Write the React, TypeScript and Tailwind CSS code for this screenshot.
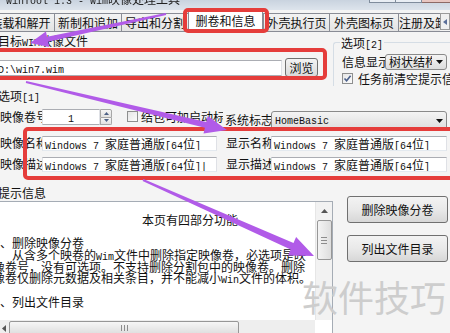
import React from "react";

// ASCII runs use a narrow mono face, CJK runs use Noto Sans CJK
function Mix({ t }: { t: string }) {
  const parts = t.match(/[\x20-\x7e]+|[^\x20-\x7e]+/g) || [];
  return (
    <>
      {parts.map((p, i) =>
        /[\x20-\x7e]/.test(p[0]) ? (
          <span key={i} className="font-['Liberation_Mono',monospace] text-[10px] whitespace-pre">
            {p}
          </span>
        ) : (
          <span key={i}>{p}</span>
        )
      )}
    </>
  );
}

function arrowPts(x0: number, y0: number, x1: number, y1: number, w0: number, w1: number, L: number, H: number) {
  const dx = x1 - x0;
  const dy = y1 - y0;
  const len = Math.hypot(dx, dy);
  const ux = dx / len;
  const uy = dy / len;
  const nx = -uy;
  const ny = ux;
  const bx = x1 - ux * L;
  const by = y1 - uy * L;
  const pts = [
    [x0 + (nx * w0) / 2, y0 + (ny * w0) / 2],
    [bx + (nx * w1) / 2, by + (ny * w1) / 2],
    [bx + (nx * H) / 2, by + (ny * H) / 2],
    [x1, y1],
    [bx - (nx * H) / 2, by - (ny * H) / 2],
    [bx - (nx * w1) / 2, by - (ny * w1) / 2],
    [x0 - (nx * w0) / 2, y0 - (ny * w0) / 2],
  ];
  return pts.map((q) => q.map((v) => v.toFixed(1)).join(",")).join(" ");
}

const tabs = [
  { label: "装载和解开", w: "w-[68px]" },
  { label: "新制和追加", w: "w-[67px]" },
  { label: "导出和分割", w: "w-[67px]" },
  { label: "删卷和信息", w: "w-[75px]", active: true },
  { label: "外壳执行页", w: "w-[66px]" },
  { label: "外壳图标页", w: "w-[69px]" },
  { label: "注册及卸载", w: "w-[42px]" },
];

const Check = ({ checked }: { checked?: boolean }) => (
  <div className="w-[11px] h-[11px] shrink-0 border border-[#8e8f8f] bg-gradient-to-br from-[#e6e6e6] to-[#fbfbfb] flex items-center justify-center">
    {checked && (
      <svg width="9" height="9" viewBox="0 0 9 9">
        <path d="M1.5 4.5 L3.6 6.8 L7.6 1.8" fill="none" stroke="#4a5f8a" strokeWidth="1.6" />
      </svg>
    )}
  </div>
);

const Combo = ({ text, w, h }: { text: string; w: string; h: string }) => (
  <div
    className={`${w} ${h} shrink-0 flex items-center rounded-[3px] border border-[#8a8a8a] bg-gradient-to-b from-[#f4f4f4] to-[#dedede] overflow-hidden`}
  >
    <div className="flex-1 pl-[3px] whitespace-nowrap overflow-hidden leading-[14px]">
      <Mix t={text} />
    </div>
    <div className="w-[14px] flex justify-center">
      <svg width="7" height="4" viewBox="0 0 7 4">
        <path d="M0 0 H7 L3.5 4 Z" fill="#111" />
      </svg>
    </div>
  </div>
);

const Field = ({ text, w }: { text: string; w: string }) => (
  <div
    className={`${w} h-[15px] shrink-0 bg-white border border-[#abadb3] border-x-[#dfe1e6] border-b-[#e3e9ef] pl-[2px] leading-[13px] whitespace-nowrap overflow-hidden`}
  >
    <Mix t={text} />
  </div>
);

const Btn = ({ text }: { text: string }) => (
  <div className="h-[27px] w-[101px] rounded-[3px] border border-[#707070] bg-gradient-to-b from-[#f3f3f3] via-[#e9e9e9] to-[#d7d7d7] flex items-center justify-center text-[12px]">
    {text}
  </div>
);

// one line of the info text, fixed height so mixed font sizes don't grow it
const Line = ({ className, children }: { className?: string; children?: React.ReactNode }) => (
  <div className={`h-[11.7px] leading-[11.7px] whitespace-nowrap ${className ?? ""}`}>{children}</div>
);

export default function App() {
  return (
    <div className="w-[450px] h-[333px] relative overflow-hidden bg-[#f4f4f4] text-[12px] text-[#111] font-['Noto_Sans_CJK_SC',sans-serif]">
      {/* title bar */}
      <div className="h-[10px] flex bg-gradient-to-b from-[#c9d3df] to-[#dde4ec] overflow-hidden">
        <div className="-mt-[8px] ml-[6px] text-[12px] leading-[14px] text-[#222] whitespace-nowrap blur-[0.5px]">
          <Mix t="WinTool 1.3 - Wim映像处理工具" />
        </div>
        <div className="ml-auto flex items-start">
          <div className="w-[27px] h-[3px] border-x border-b border-[#7f8c9c] bg-[#e9eef4]" />
          <div className="w-[26px] h-[3px] border-r border-b border-[#7f8c9c] bg-[#e9eef4]" />
          <div className="w-[28px] h-[3px] border-b border-[#8d6a66] bg-[#e8c6c1]" />
        </div>
      </div>

      {/* tab strip */}
      <div className="h-[21px] flex items-end -ml-[14px]">
        {tabs.map((t) =>
          t.active ? (
            <div
              key={t.label}
              className={`${t.w} h-[21px] shrink-0 bg-white border border-b-0 border-[#898c95] rounded-t-[2px] text-center leading-[19px] whitespace-nowrap overflow-hidden relative z-10`}
            >
              {t.label}
            </div>
          ) : (
            <div
              key={t.label}
              className={`${t.w} h-[18px] shrink-0 bg-gradient-to-b from-[#f3f3f3] to-[#e3e3e3] border-l border-t border-[#898c95] text-center leading-[17px] whitespace-nowrap overflow-hidden`}
            >
              {t.label}
            </div>
          )
        )}
        <div className="w-[10px] h-[17px] shrink-0 border border-[#9a9a9a] bg-[#f0f0f0] flex items-center pl-[2px] mb-[1px]">
          <svg width="4" height="6" viewBox="0 0 4 6">
            <path d="M4 0 V6 L0 3 Z" fill="#5b6f99" />
          </svg>
        </div>
      </div>

      {/* page */}
      <div className="border-t border-[#898c95]">
        {/* target file + options[2] */}
        <div className="flex h-[54px]">
          <div className="w-[333px] shrink-0 pt-[2px]">
            <div className="-ml-[2px] leading-[13px]">
              <Mix t="目标WIM映像文件" />
            </div>
            <div className="mt-[8px] flex items-center h-[19px]">
              <div className="-ml-[4px] w-[286px] h-[16px] bg-white border border-[#abadb3] border-x-[#dfe1e6] pl-[1px] leading-[14px]">
                <Mix t="D:\win7.wim" />
              </div>
              <div className="ml-[3px] w-[33px] h-[19px] rounded-[3px] border border-[#707070] bg-gradient-to-b from-[#f3f3f3] to-[#d9d9d9] flex items-center justify-center">
                浏览
              </div>
            </div>
          </div>
          <div className="mt-[10px] flex-1 border-l border-t border-[#d5dde5] rounded-tl-[3px] pl-[8px]">
            <div className="-mt-[7px] -ml-[2px] w-fit bg-[#f4f4f4] px-[1px] leading-[13px]">
              <Mix t="选项[2]" />
            </div>
            <div className="mt-[2px] flex items-center">
              <div className="w-[43px] shrink-0 overflow-hidden whitespace-nowrap leading-[14px]">信息显示</div>
              <Combo text="树状结构" w="w-[62px]" h="h-[16px]" />
            </div>
            <div className="mt-[2px] flex items-center h-[13px]">
              <Check checked />
              <div className="ml-[5px] whitespace-nowrap leading-[13px]">任务前清空提示信息</div>
            </div>
          </div>
        </div>

        {/* options[1] */}
        <div className="pt-[4px]">
          <div className="-ml-[2px] leading-[12px]">
            <Mix t="选项[1]" />
          </div>
          <div className="mt-[4px] h-[22px] flex items-start">
            <div className="w-[42px] shrink-0 overflow-hidden whitespace-nowrap leading-[16px]">映像卷号</div>
            <div className="w-[58px] h-[16px] shrink-0 bg-white border border-[#abadb3] border-x-[#dfe1e6] text-center leading-[14px]">
              <Mix t="1" />
            </div>
            <div className="w-[12px] h-[16px] shrink-0 flex flex-col">
              <div className="flex-1 border border-[#a7a7a7] rounded-tr-[2px] bg-gradient-to-b from-[#f6f6f6] to-[#e1e1e1] flex items-center justify-center">
                <svg width="5" height="3" viewBox="0 0 5 3">
                  <path d="M0 3 H5 L2.5 0 Z" fill="#4d6185" />
                </svg>
              </div>
              <div className="flex-1 border border-t-0 border-[#a7a7a7] rounded-br-[2px] bg-gradient-to-b from-[#f6f6f6] to-[#e1e1e1] flex items-center justify-center">
                <svg width="5" height="3" viewBox="0 0 5 3">
                  <path d="M0 0 H5 L2.5 3 Z" fill="#4d6185" />
                </svg>
              </div>
            </div>
            <div className="ml-[15px] mt-[2px]">
              <Check />
            </div>
            <div className="ml-[3px] w-[82px] shrink-0 overflow-hidden whitespace-nowrap leading-[15px]">
              结包可加启动标记
            </div>
            <div className="ml-[2px] mt-[3px] w-[46px] shrink-0 overflow-hidden whitespace-nowrap leading-[15px]">
              系统标志
            </div>
            <div className="mt-[2px]">
              <Combo text="HomeBasic" w="w-[176px]" h="h-[19px]" />
            </div>
          </div>
          <div className="mt-[4px] h-[16px] flex items-center">
            <div className="w-[42px] shrink-0 overflow-hidden whitespace-nowrap leading-[14px]">映像名称</div>
            <Field text="Windows 7 家庭普通版[64位]" w="w-[175px]" />
            <div className="ml-[9px] w-[45px] shrink-0 overflow-hidden whitespace-nowrap leading-[14px]">显示名称</div>
            <Field text="Windows 7 家庭普通版[64位]" w="w-[176px]" />
          </div>
          <div className="mt-[5px] h-[16px] flex items-center">
            <div className="w-[42px] shrink-0 overflow-hidden whitespace-nowrap leading-[14px]">映像描述</div>
            <Field text="Windows 7 家庭普通版[64位]|" w="w-[175px]" />
            <div className="ml-[9px] w-[45px] shrink-0 overflow-hidden whitespace-nowrap leading-[14px]">显示描述</div>
            <Field text="Windows 7 家庭普通版[64位]" w="w-[176px]" />
          </div>
        </div>

        {/* info area */}
        <div className="mt-[13px] flex">
          <div className="w-[333px] shrink-0 pt-[1px]">
            <div className="-ml-[2px] leading-[13px]">提示信息</div>
            <div className="mt-[2px] -ml-px w-[334px] h-[136px] bg-white border-t border-r border-[#a5acb5] flex flex-col">
              <div className="h-[118px] flex">
                <div className="flex-1 overflow-hidden pt-[12px] text-[12px]">
                  <Line className="pl-[143px]">本页有四部分功能</Line>
                  <Line />
                  <Line className="-ml-[11px]">一、删除映像分卷</Line>
                  <Line className="pl-[13px]">
                    <Mix t="从含多个映卷的Wim文件中删除指定映像卷，必选项是映" />
                  </Line>
                  <Line className="-ml-[18px]">映像卷号，没有可选项。不支持删除分割包中的映像卷。删除</Line>
                  <Line className="-ml-[18px]">
                    <Mix t="映像卷仅删除元数据及相关条目，并不能减小Win文件的体积。" />
                  </Line>
                  <Line />
                  <Line className="-ml-[11px]">二、列出文件目录</Line>
                </div>
                <div className="w-[17px] shrink-0 bg-[#f2f2f2] border-l border-[#e6e6e6] flex flex-col items-center">
                  <div className="h-[17px] w-full flex items-center justify-center">
                    <svg width="7" height="4" viewBox="0 0 7 4">
                      <path d="M0 4 H7 L3.5 0 Z" fill="#555" />
                    </svg>
                  </div>
                  <div className="mt-[1px] w-[15px] h-[40px] rounded-[2px] border border-[#979797] bg-gradient-to-r from-[#f4f4f4] to-[#dedede] flex flex-col items-center justify-center gap-[2px]">
                    <div className="w-[6px] h-px bg-[#8c8c8c]" />
                    <div className="w-[6px] h-px bg-[#8c8c8c]" />
                    <div className="w-[6px] h-px bg-[#8c8c8c]" />
                  </div>
                </div>
              </div>
              <div className="h-[16px] flex">
                <div className="w-[316px] shrink-0 bg-[#eeeeee] flex items-center">
                  <div className="w-[10px] flex justify-center">
                    <svg width="4" height="7" viewBox="0 0 4 7">
                      <path d="M4 0 V7 L0 3.5 Z" fill="#555" />
                    </svg>
                  </div>
                  <div className="w-[230px] h-[15px] rounded-[2px] border border-[#979797] bg-gradient-to-b from-[#f6f6f6] to-[#dcdcdc] flex items-center justify-center gap-[2px]">
                    <div className="w-px h-[6px] bg-[#8c8c8c]" />
                    <div className="w-px h-[6px] bg-[#8c8c8c]" />
                    <div className="w-px h-[6px] bg-[#8c8c8c]" />
                  </div>
                </div>
                <div className="flex-1 bg-white" />
              </div>
            </div>
          </div>
          <div className="ml-[14px] pt-[11px] flex flex-col gap-[12px]">
            <Btn text="删除映像分卷" />
            <Btn text="列出文件目录" />
          </div>
        </div>
      </div>

      {/* annotation overlays */}
      <div className="absolute left-[183px] top-[8px] w-[86px] h-[25px] border-[4px] border-[#e53d3b] rounded-[5px] z-20" />
      <div className="absolute left-[-8px] top-[48px] w-[335px] h-[32px] border-[4px] border-[#e53d3b] rounded-[5px] z-20" />
      <div className="absolute left-[23px] top-[127px] w-[440px] h-[53px] border-[4px] border-[#e53d3b] rounded-[5px] z-20" />
      <svg className="absolute left-0 top-0 z-30" width="450" height="333" viewBox="0 0 450 333">
        <polygon points={arrowPts(166, 14, 30, 43, 2, 5, 18, 16)} fill="#b15be8" />
        <polygon points={arrowPts(26, 82, 227, 130, 2, 6, 22, 18)} fill="#b15be8" />
        <polygon points={arrowPts(143, 180, 314, 256, 2, 7, 24, 20)} fill="#b15be8" />
      </svg>
      <div className="absolute left-[302px] top-[274px] text-[36px] leading-[44px] text-[#cdcdcd] whitespace-nowrap z-10">
        软件技巧
      </div>
    </div>
  );
}
